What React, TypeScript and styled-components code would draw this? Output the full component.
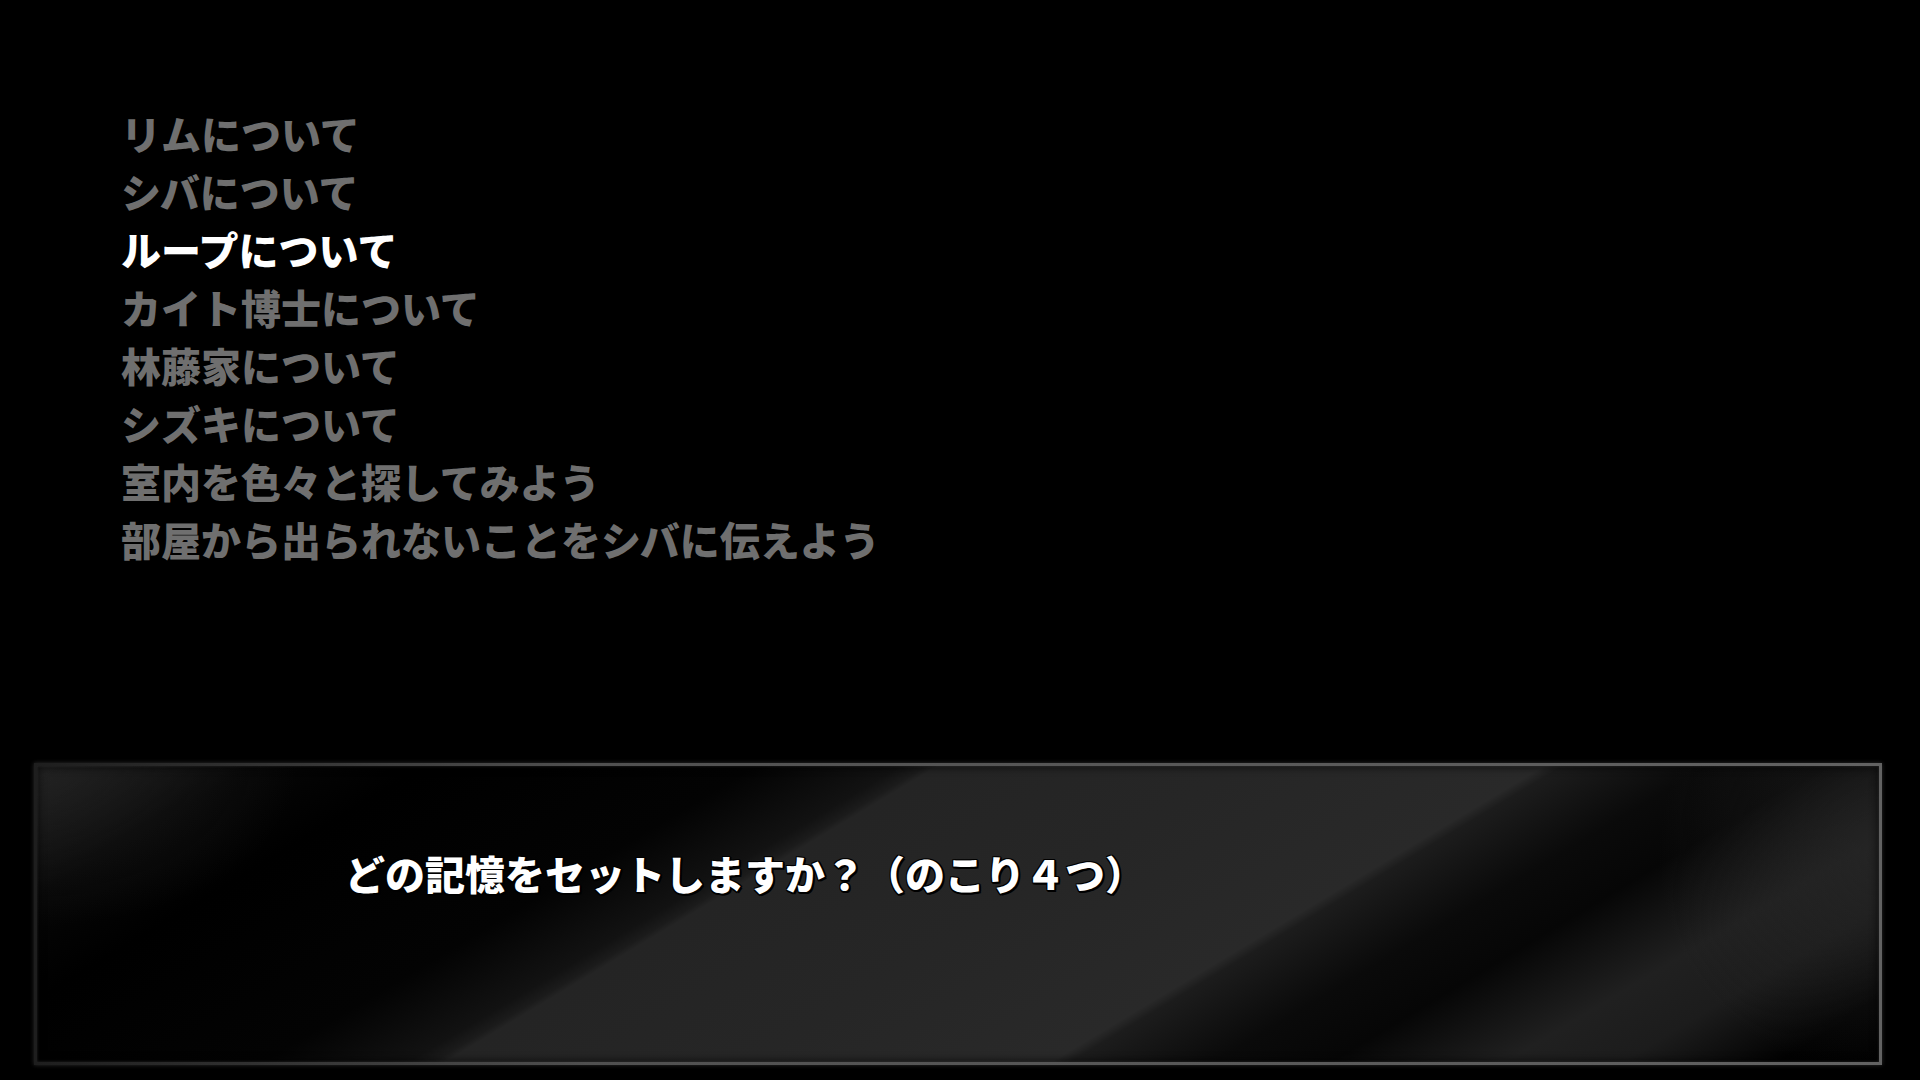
import styled, { createGlobalStyle } from 'styled-components'

const GlobalStyle = createGlobalStyle`
  html, body {
    margin: 0;
    padding: 0;
    background: #000;
  }
  body {
    font-family: "Noto Sans CJK JP", "Noto Sans", sans-serif;
  }
`

const Screen = styled.div`
  width: 1920px;
  height: 1080px;
  background: #000;
  display: flex;
  flex-direction: column;
  overflow: hidden;
`

const MemoryList = styled.ul`
  list-style: none;
  margin: 0;
  padding: 104px 0 0 121px;
  display: flex;
  flex-direction: column;
`

const MemoryItem = styled.li<{ $active?: boolean }>`
  font-size: 40px;
  line-height: 58px;
  height: 58px;
  font-weight: 900;
  white-space: nowrap;
  color: ${p => (p.$active ? '#ffffff' : '#6f6f6f')};
`

const MessageBox = styled.div`
  margin: auto 38px 15px 34px;
  height: 302px;
  box-sizing: border-box;
  padding: 87px 0 0 308px;
  border: 3px solid transparent;
  border-image: linear-gradient(90deg, #1e1e1e 0%, #2e2e2e 10%, #505050 30%, #5a5a5a 70%, #626262 100%) 1;
  box-shadow:
    0 0 4px rgba(100, 100, 100, 0.45),
    inset 0 0 3px rgba(110, 110, 110, 0.35),
    inset 0 0 10px rgba(0, 0, 0, 0.85);
  background:
    radial-gradient(ellipse 260px 160px at 0% 0%, rgba(40, 40, 40, 0.55), rgba(40, 40, 40, 0) 100%),
    radial-gradient(ellipse 220px 220px at 100% 30%, rgba(38, 38, 38, 0.7), rgba(38, 38, 38, 0) 100%),
    linear-gradient(
      149deg,
      #1c1c1c 0px,
      #060606 110px,
      #000000 200px,
      #030303 370px,
      #121212 445px,
      #1b1b1b 458px,
      #242424 464px,
      #262626 620px,
      #292929 776px,
      #1c1c1c 786px,
      #0a0a0a 860px,
      #060606 920px,
      #202020 1010px,
      #1c1c1c 1070px,
      #020202 1150px,
      #000000 1211px
    );
`

const Prompt = styled.p`
  margin: 0;
  font-size: 40px;
  line-height: 40px;
  font-weight: 900;
  color: #ffffff;
  white-space: nowrap;
  text-shadow:
    2px 2px 0 #000,
    -1px -1px 0 #000,
    1px -1px 0 #000,
    -1px 1px 0 #000,
    2px 0 0 #000,
    0 2px 0 #000;
`

const memories = [
  'リムについて',
  'シバについて',
  'ループについて',
  'カイト博士について',
  '林藤家について',
  'シズキについて',
  '室内を色々と探してみよう',
  '部屋から出られないことをシバに伝えよう',
]

export default function App() {
  const selected = 2
  return (
    <>
      <GlobalStyle />
      <Screen>
        <MemoryList>
          {memories.map((m, i) => (
            <MemoryItem key={m} $active={i === selected}>
              {m}
            </MemoryItem>
          ))}
        </MemoryList>
        <MessageBox>
          <Prompt>どの記憶をセットしますか？（のこり４つ）</Prompt>
        </MessageBox>
      </Screen>
    </>
  )
}
